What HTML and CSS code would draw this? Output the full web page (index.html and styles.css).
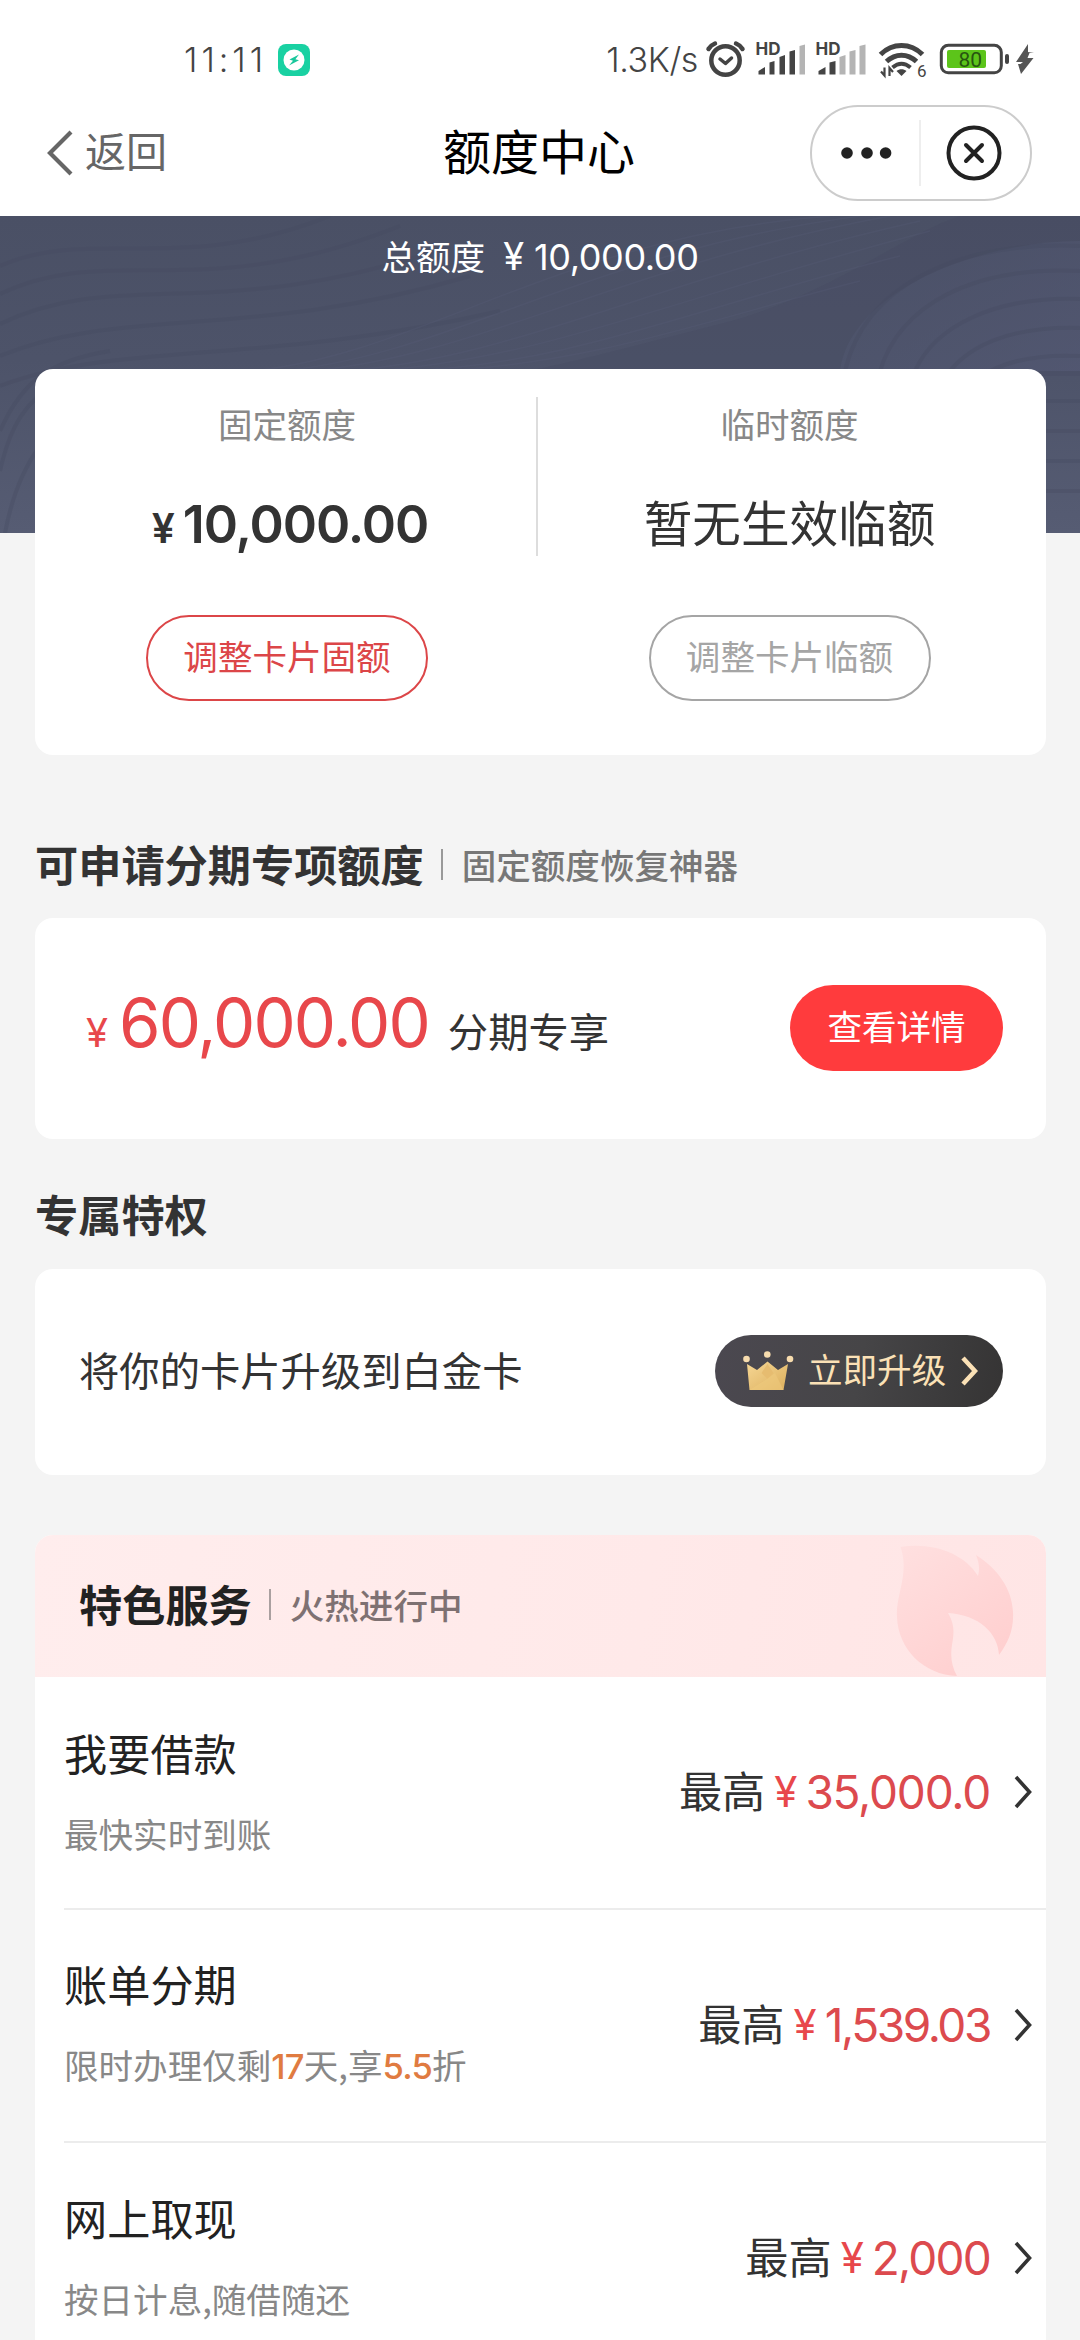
FILE: index.html
```html
<!DOCTYPE html>
<html lang="zh-CN">
<head>
<meta charset="utf-8">
<title>额度中心</title>
<link rel="stylesheet" href="styles.css">
</head>
<body>
<div class="screen">
  <header class="status">
    <span class="clock">11:11</span>
    <svg class="app-badge" width="32" height="32" viewBox="0 0 32 32"><rect width="32" height="32" rx="8" fill="#19d1a2"/><circle cx="16" cy="16" r="10.5" fill="#fff"/><path d="M21 10.5 11.500 15.500l3.500 1.200-4 4.800 10-5.200-3.600-1.100z" fill="#19c79c"/></svg>
    <span class="speed">1.3K/s</span>
    <svg class="status-icons" width="330" height="44" viewBox="704 38 330 44">
      <g fill="none" stroke="#444" stroke-width="4.500" stroke-linecap="round" stroke-linejoin="round">
        <circle cx="725.500" cy="60.500" r="14.200"/>
        <path d="m720 59 5.500 4.500 6-5.500" stroke-width="3.500"/>
        <path d="M708.500 49c1.500-2.500 4-4.500 6.500-5.500M742.500 49c-1.500-2.500-4-4.500-6.500-5.500"/>
      </g>
      <g fill="#444">
        <text class="hd" x="755.500" y="54.500">HD</text>
        <path d="M758.500 74.500v-3.500l6.500-4v7.500zM769.500 74.500v-12l5-1.500v13.500zM779.500 74.500V57l5.500-2v19.500zM789.500 74.500V51.500l5.500-1.500v24.500z"/>
        <path d="M799.500 74.500V46l5.500-1.500v30z" fill="#b4b4b4"/>
        <text class="hd" x="815.500" y="54.500">HD</text>
        <path d="M818.500 74.500v-3.500l7-4v7.500zM829.500 74.500v-12l6-1.500v13.500z"/>
        <path d="M839.500 74.500V57l6-2v19.500zM849.500 74.500V51.500l6-1.500v24.500zM859.500 74.500V46l6-1.500v30z" fill="#b4b4b4"/>
      </g>
      <g fill="none" stroke="#444" stroke-width="5">
        <path d="M880.500 54.500c12-12 30-12 42 0"/>
        <path d="M886.500 61.500c9-8.500 21-8.500 30 0"/>
        <path d="M892.500 67.500c6-5 12-5 18 0" stroke-width="4"/>
      </g>
      <path d="M896.500 71c3-2.500 7-2.500 10 0l-5 5z" fill="#444"/>
      <path d="M884.500 67.500v8l-3.500-4M889.500 76v-8l3.500 4" fill="none" stroke="#444" stroke-width="2.200"/>
      <text class="wifi-gen" x="917" y="77">6</text>
      <rect x="941.300" y="45.300" width="60" height="27.500" rx="7" fill="#fff" stroke="#444" stroke-width="3"/>
      <rect x="947" y="50" width="39" height="18" rx="2" fill="#5cc41a"/>
      <text class="charge" x="958.500" y="66.500">80</text>
      <rect x="1005" y="54" width="4" height="10" rx="2" fill="#444"/>
      <path d="m1028 44-12 18h7l-2.500 2h-2.500l3 10 12.500-16h-6l2-5h4.500l-6-1z" fill="#555"/>
    </svg>
  </header>

  <nav class="nav">
    <a class="back"><svg width="28" height="46" viewBox="0 0 28 46"><path d="M25 2 4 23l21 21" fill="none" stroke="#666" stroke-width="4.200"/></svg><span>返回</span></a>
    <h1 class="title">额度中心</h1>
    <div class="capsule">
      <svg class="dots" width="52" height="14" viewBox="0 0 52 14"><g fill="#222"><circle cx="7" cy="7" r="5.800"/><circle cx="27" cy="7" r="5.800"/><circle cx="45.600" cy="7" r="5.800"/></g></svg>
      <i class="capsule-line"></i>
      <svg class="close" width="56" height="56" viewBox="0 0 56 56"><g fill="none" stroke="#222" stroke-width="4" stroke-linecap="round"><circle cx="28" cy="28" r="25.500"/><path d="m20 20 16 16M36 20 20 36"/></g></svg>
    </div>
  </nav>

  <section class="hero">
    <svg class="waves" width="1080" height="317" viewBox="0 0 1080 317">
      <defs><linearGradient id="fold" x1="0" y1="0" x2="1" y2="1"><stop offset="0" stop-color="#4b5268"/><stop offset="1" stop-color="#565b77"/></linearGradient></defs>
      <path d="M960 0C900 20 830 80 720 108S560 150 500 160l580 0V0z" fill="#444a60" opacity=".3"/>
      <path d="M1080 25c-100 0-230 50-240 130h240z" fill="url(#fold)" opacity=".6"/>
      <g fill="none" stroke="#454a60" stroke-width="4" opacity=".32">
        <path d="M0 50C90 10 180 60 330 0"/><path d="M0 78C110 25 200 90 400 10"/><path d="M0 108C120 50 220 110 450 30"/><path d="M0 140C120 90 250 125 470 60"/><path d="M0 170C120 125 260 150 500 95"/><path d="M0 215C20 170 45 145 110 135"/><path d="M0 255C10 210 25 185 60 165"/><path d="M5 317C12 280 25 250 40 230"/>
        <path d="M845 155c20-85 110-130 235-125"/><path d="M880 155c20-65 90-105 200-100"/><path d="M915 155c20-45 80-75 165-72"/><path d="M950 155c20-25 60-45 130-43"/><path d="M990 155c20-10 50-17 90-15"/><path d="M1046 185h34M1046 215h34M1046 245h34M1046 275h34"/>
      </g>
      <g fill="none" stroke="#5b607c" stroke-width="1.500" opacity=".22">
        <path d="M250 155C420 140 560 20 830 0"/><path d="M280 155C450 140 590 35 860 0"/><path d="M310 155C480 140 620 50 890 0"/><path d="M340 155C510 145 650 65 920 5"/><path d="M370 155C540 145 680 80 930 15"/><path d="M400 155C570 150 700 90 900 40"/><path d="M430 155C590 150 720 100 860 65"/>
      </g>
    </svg>
    <p class="total"><span>总额度</span><span class="num total-sign">¥</span><span class="num total-num">10,000.00</span></p>
  </section>

  <main class="content">
    <section class="card limits">
      <div class="limit fixed">
        <p class="label">固定额度</p>
        <p class="fixed-amount num"><span class="sign">¥</span><span>10,000.00</span></p>
        <button class="btn outline-red">调整卡片固额</button>
      </div>
      <i class="limits-line"></i>
      <div class="limit temp">
        <p class="label">临时额度</p>
        <p class="temp-amount">暂无生效临额</p>
        <button class="btn outline-grey">调整卡片临额</button>
      </div>
    </section>

    <div class="heading first"><h2>可申请分期专项额度</h2><i class="bar"></i><span class="sub">固定额度恢复神器</span></div>
    <section class="card instalment">
      <div class="offer"><span class="num offer-sign">¥</span><span class="num offer-num">60,000.00</span><span class="offer-text">分期专享</span></div>
      <button class="btn solid">查看详情</button>
    </section>

    <div class="heading second"><h2>专属特权</h2></div>
    <section class="card privilege">
      <p class="body-text">将你的卡片升级到白金卡</p>
      <button class="upgrade">
        <svg class="crown" width="52" height="42" viewBox="0 0 52 42"><defs><linearGradient id="gold" x1="0" y1="0" x2="1" y2="1"><stop offset="0" stop-color="#f6d795"/><stop offset="1" stop-color="#dcaf5c"/></linearGradient></defs><path d="M5 14l10 6 10.500-8.500L36 20l10-6-4.500 26h-34z" fill="url(#gold)"/><path d="m25.500 14 6 9-6 6-6-6z" fill="#e6bc70"/><path d="m25 29 8-6 8.500 17h-34z" fill="#efc97d" opacity=".6"/><g fill="#f7dcae"><circle cx="4.500" cy="9" r="3.300"/><circle cx="25.300" cy="4.500" r="3.300"/><circle cx="48" cy="9" r="3.300"/></g></svg>
        <span>立即升级</span>
        <svg class="upgrade-arrow" width="18" height="30" viewBox="0 0 18 30"><path d="m3 2 12 13L3 28" fill="none" stroke="#fbe1b6" stroke-width="4.500"/></svg>
      </button>
    </section>

    <section class="card services">
      <div class="services-head">
        <h2>特色服务</h2><i class="bar"></i><span class="sub">火热进行中</span>
        <svg class="flame" width="118" height="132" viewBox="0 0 118 132"><defs><linearGradient id="fire" x1="0" y1="0" x2=".7" y2="1"><stop offset="0" stop-color="#ffe0e0"/><stop offset="1" stop-color="#ffcfcf"/></linearGradient></defs><path d="M4.500 2C36-3 68 8 82 31c2-7 1-14-2-21 22 14 36 34 37 57 1 18-5 31-14 43-1-22-20-40-51-42 7 12 6 20 4 32-2 12 0 22 5 31C28 130 2 104 1 72-1 52 14 28 4.500 2z" fill="url(#fire)"/></svg>
      </div>
      <div class="row">
        <div class="row-main"><h3>我要借款</h3><p>最快实时到账</p></div>
        <div class="row-side"><span class="upto">最高</span><span class="num row-sign">¥</span><span class="num row-num a1">35,000.0</span><svg class="go" width="20" height="34" viewBox="0 0 20 34"><path d="m3 2 13.500 15L3 32" fill="none" stroke="#333" stroke-width="3.600"/></svg></div>
      </div>
      <div class="row">
        <div class="row-main"><h3>账单分期</h3><p>限时办理仅剩<b>17</b>天,享<b>5.5</b>折</p></div>
        <div class="row-side"><span class="upto">最高</span><span class="num row-sign">¥</span><span class="num row-num a2">1,539.03</span><svg class="go" width="20" height="34" viewBox="0 0 20 34"><path d="m3 2 13.500 15L3 32" fill="none" stroke="#333" stroke-width="3.600"/></svg></div>
      </div>
      <div class="row">
        <div class="row-main"><h3>网上取现</h3><p>按日计息,随借随还</p></div>
        <div class="row-side"><span class="upto">最高</span><span class="num row-sign">¥</span><span class="num row-num a3">2,000</span><svg class="go" width="20" height="34" viewBox="0 0 20 34"><path d="m3 2 13.500 15L3 32" fill="none" stroke="#333" stroke-width="3.600"/></svg></div>
      </div>
    </section>
  </main>
</div>
</body>
</html>
```
FILE: styles.css
```css
* { box-sizing: border-box; margin: 0; padding: 0; }
html, body { height: 2340px; overflow: hidden; }
body { width: 1080px; background: #f4f4f4; color: #333; font-family: "Noto Sans CJK SC", sans-serif; font-size: 34.56px; line-height: 1; }
button { border: 0; background: none; font: inherit; color: inherit; }
svg { display: block; flex: none; }
h1, h2, h3 { font-size: 43.2px; line-height: 48px; white-space: nowrap; }
i { display: block; flex: none; }
.screen { height: 2340px; overflow: hidden; }
.num { font-family: Inter, "Noto Sans CJK SC", sans-serif; white-space: nowrap; }

.status { height: 96px; padding: 24px 46px 0 184px; background: #fff; display: flex; align-items: center; color: #444; font-family: Inter, sans-serif; }
.clock { width: 94px; font-size: 34px; font-weight: 300; letter-spacing: 4px; white-space: nowrap; }
.speed { margin-left: auto; font-size: 34px; font-weight: 300; letter-spacing: -.4px; }
.status-icons { margin-left: 6px; }
.hd { font: 700 17px Inter, sans-serif; }
.wifi-gen { font: 400 17px Roboto, sans-serif; fill: #444; }
.charge { font: 400 21px Roboto, sans-serif; fill: #275510; }

.nav { height: 120px; padding: 0 48px 6px 46px; background: #fff; display: grid; grid-template-columns: 1fr auto 1fr; align-items: center; }
.back { display: flex; align-items: center; gap: 11px; color: #666; font-size: 41px; }
.back span { padding-bottom: 7px; }
.title { padding-bottom: 9px; font-size: 48px; font-weight: 400; color: #000; }
.capsule { justify-self: end; width: 222px; height: 96px; border: 2px solid #ccc; border-radius: 48px; display: flex; align-items: center; padding-left: 28px; }
.capsule-line { width: 2px; height: 66px; margin: 0 25px 0 27px; background: #eee; }

.hero { position: relative; height: 317px; background: linear-gradient(#4a5065, #4d5369 45%, #565c73); }
.waves { position: absolute; inset: 0; }
.total { position: relative; display: flex; justify-content: center; align-items: baseline; padding-top: 21px; line-height: 36px; color: #fff; }
.total-sign { margin-left: 18px; font-size: 38px; }
.total-num { margin-left: 10px; font-size: 36px; letter-spacing: -.4px; }

.content { padding: 0 34px 0 35px; margin-top: -164px; position: relative; }
.card { background: #fff; border-radius: 18px; }
.limits { height: 386px; display: flex; }
.limit { display: flex; flex-direction: column; align-items: center; padding-top: 36px; }
.fixed { width: 501px; padding-left: 3px; }
.temp { flex: 1; padding-right: 5px; }
.limits-line { width: 2px; height: 159px; margin-top: 28px; background: #ddd; }
.label { line-height: 36px; color: #888; }
.fixed-amount { display: flex; align-items: baseline; gap: 9px; margin-top: 54px; padding-left: 6px; font-size: 52px; line-height: 60px; font-weight: 600; height: 60px; letter-spacing: -1.1px; }
.sign { font-size: 41px; }
.temp-amount { margin-top: 50px; height: 60px; line-height: 60px; font-size: 48.6px; }
.btn { width: 213px; height: 86px; border-radius: 43px; padding-bottom: 5px; text-align: center; font-size: 34.56px; }
.limit .btn { width: 282px; margin-top: 60px; border: 2px solid; }
.temp .btn { margin-top: 64px; }
.outline-red { color: #dc4648; }
.outline-grey { color: #a5a5a5; }

.heading { display: flex; align-items: center; }
.heading.first { height: 163px; padding-top: 56px; }
.heading.second { height: 130px; padding-top: 22px; }
h2 { font-weight: 700; padding-bottom: 4px; }
.bar { width: 2px; height: 31px; margin: 0 19px 0 17px; background: #999; }
.sub { color: #777; font-weight: 500; white-space: nowrap; }

.instalment { height: 221px; padding: 0 43px 1px 51px; display: flex; align-items: center; justify-content: space-between; }
.offer { display: flex; align-items: baseline; line-height: 60px; }
.offer-sign { font-size: 40px; color: #e8474b; }
.offer-num { margin-left: 11px; font-size: 67px; color: #e8474b; letter-spacing: -1.9px; }
.offer-text { margin-left: 19px; font-size: 40.32px; }
.solid { background: #ff3b3d; color: #fff; }

.privilege { height: 206px; padding: 0 43px 3px 44px; display: flex; align-items: center; justify-content: space-between; }
.body-text { padding-bottom: 4px; font-size: 40.32px; line-height: 48px; }
.upgrade { width: 288px; height: 72px; border-radius: 36px; padding-left: 27px; display: flex; align-items: center; background: linear-gradient(100deg, #4b4850, #464547 50%, #353434); color: #fbe1b6; }
.upgrade span { margin-left: 14px; padding-bottom: 4px; }
.upgrade-arrow { margin-left: 14px; }

.services { margin-top: 60px; height: 840px; border-radius: 18px 18px 0 0; overflow: hidden; }
.services-head { position: relative; height: 142px; padding: 0 0 3px 44px; display: flex; align-items: center; background: linear-gradient(100deg, #ffeded, #ffe9e9 60%, #ffe5e5); }
.services-head h2 { color: #222; }
.services-head .bar { background: #aaa0a0; }
.services-head .sub { color: #7e7172; }
.flame { position: absolute; right: 32px; top: 10px; }
.row { height: 232.8px; margin-left: 29px; padding-right: 13px; display: flex; align-items: center; justify-content: space-between; border-bottom: 2px solid #ececec; }
.row h3 { font-weight: 400; color: #222; }
.row-main { padding-bottom: 4px; }
.row-main p { margin-top: 37px; line-height: 40px; color: #888; white-space: nowrap; }
.row-main b { font: 500 34.56px Inter, sans-serif; color: #e07b41; letter-spacing: -.8px; }
.row-side { display: flex; align-items: center; font-size: 43.2px; line-height: 50px; }
.upto { padding-bottom: 6px; }
.row-sign { margin-left: 9px; font-size: 42px; color: #e8474b; }
.row-num { margin-left: 8px; font-size: 46px; color: #dc4a4e; }
.a1 { letter-spacing: -1.2px; }
.a2 { letter-spacing: -2.4px; }
.a3 { letter-spacing: -1.8px; }
.go { margin-left: 23px; }
```
